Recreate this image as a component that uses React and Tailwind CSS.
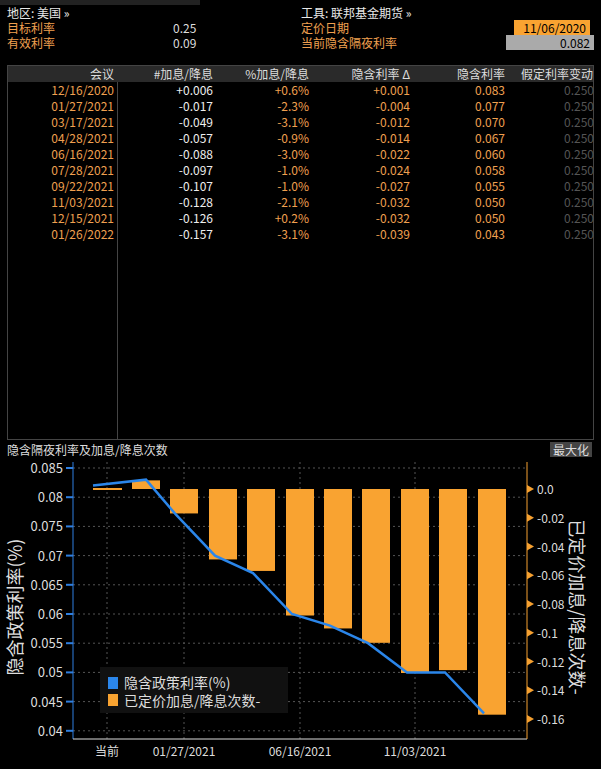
import React from 'react';

const rows = [
  ['12/16/2020', '+0.006', '+0.6%', '+0.001', '0.083'],
  ['01/27/2021', '-0.017', '-2.3%', '-0.004', '0.077'],
  ['03/17/2021', '-0.049', '-3.1%', '-0.012', '0.070'],
  ['04/28/2021', '-0.057', '-0.9%', '-0.014', '0.067'],
  ['06/16/2021', '-0.088', '-3.0%', '-0.022', '0.060'],
  ['07/28/2021', '-0.097', '-1.0%', '-0.024', '0.058'],
  ['09/22/2021', '-0.107', '-1.0%', '-0.027', '0.055'],
  ['11/03/2021', '-0.128', '-2.1%', '-0.032', '0.050'],
  ['12/15/2021', '-0.126', '+0.2%', '-0.032', '0.050'],
  ['01/26/2022', '-0.157', '-3.1%', '-0.039', '0.043'],
];

const font = { fontFamily: '"Noto Sans CJK SC", "Liberation Sans", sans-serif' };

// chart scales
const yL = (v) => 469 + ((0.085 - v) / 0.005) * 29.2 - 458;
const yR = (v) => 490 + (-v / 0.02) * 28.75 - 458;
const barX = [146, 184, 223, 261, 300, 338, 376, 415, 453, 492];

const Chart = () => {
  const linePts = [[93, 0.082], [146, 0.083], ...rows.slice(1).map((r, i) => [barX[i + 1] - 8, parseFloat(r[4])])]
    .map(([x, v]) => `${x},${yL(v)}`).join(' ');
  const leftTicks = [0.085, 0.08, 0.075, 0.07, 0.065, 0.06, 0.055, 0.05, 0.045, 0.04];
  const rightTicks = [0, -0.02, -0.04, -0.06, -0.08, -0.1, -0.12, -0.14, -0.16];
  return (
    <svg width="601" height="311" className="block" style={font}>
      {leftTicks.map((t) => (
        <g key={t}>
          <line x1="73" x2="527" y1={yL(t)} y2={yL(t)} stroke="#555" strokeDasharray="2 3" />
          <line x1="66" x2="73" y1={yL(t)} y2={yL(t)} stroke="#2f7fe0" strokeWidth="2" />
          <text x="63" y={yL(t) + 5} textAnchor="end" fill="#ddd" fontSize="13">{String(t)}</text>
        </g>
      ))}
      {[107, 184, 300, 415].map((x) => (
        <line key={x} x1={x} x2={x} y1="5" y2="282" stroke="#555" strokeDasharray="2 3" />
      ))}
      <line x1="73" x2="73" y1="5" y2="282" stroke="#2f7fe0" />
      <line x1="73" x2="527" y1="282" y2="282" stroke="#ddd" />
      <line x1="527" x2="527" y1="5" y2="282" stroke="#f5a030" />
      {rightTicks.map((t) => (
        <g key={t}>
          <polygon points={`527,${yR(t) - 4} 534,${yR(t)} 527,${yR(t) + 4}`} fill="#f5a030" />
          <text x="537" y={yR(t) + 5} fill="#ddd" fontSize="12">{t === 0 ? '0.0' : t === -0.1 ? '-0.1' : t.toFixed(2)}</text>
        </g>
      ))}
      <line x1="93" x2="122" y1={yR(0)} y2={yR(0)} stroke="#f5a030" strokeWidth="2" />
      {rows.map((r, i) => {
        const v = parseFloat(r[1]);
        const y0 = yR(0), y1 = yR(v);
        return <rect key={i} x={barX[i] - 14} width="28" y={Math.min(y0, y1)} height={Math.abs(y1 - y0)} fill="#f9a331" />;
      })}
      <polyline points={linePts} fill="none" stroke="#2b86ea" strokeWidth="2.5" />
      <rect x="100" y="210" width="188" height="46" fill="#111" />
      <rect x="108" y="220" width="10" height="12" fill="#2b86ea" />
      <text x="124" y="231" fill="#ddd" fontSize="14">隐含政策利率(%)</text>
      <rect x="108" y="237" width="10" height="12" fill="#f9a331" />
      <text x="124" y="249" fill="#ddd" fontSize="14">已定价加息/降息次数-</text>
      {[['当前', 107], ['01/27/2021', 184], ['06/16/2021', 300], ['11/03/2021', 415]].map(([l, x]) => (
        <text key={l} x={x} y="299" textAnchor="middle" fill="#ddd" fontSize="12">{l}</text>
      ))}
      <text transform="translate(22,150) rotate(-90)" textAnchor="middle" fill="#ddd" fontSize="18">隐含政策利率(%)</text>
      <text transform="translate(570,150) rotate(90)" textAnchor="middle" fill="#ddd" fontSize="18">已定价加息/降息次数-</text>
    </svg>
  );
};

export default function App() {
  return (
    <div className="w-[601px] h-[769px] bg-black text-[12px] overflow-hidden" style={font}>
      <div className="h-[5px] flex">
        <div className="w-[200px] bg-[#222]" />
      </div>
      <div className="flex px-[7px] leading-[15px]">
        <div className="w-[294px]">
          <div className="text-[#e8e8e8]">地区: 美国 »</div>
          <div className="flex text-[#f0a050]"><span className="w-[166px]">目标利率</span><span className="text-[#ddd]">0.25</span></div>
          <div className="flex text-[#f0a050]"><span className="w-[166px]">有效利率</span><span className="text-[#ddd]">0.09</span></div>
        </div>
        <div className="flex-1">
          <div className="text-[#e8e8e8]">工具: 联邦基金期货 »</div>
          <div className="flex justify-between text-[#f0a050]"><span>定价日期</span><span className="bg-[#f9a331] text-black w-[76px] text-right pr-1 mr-1">11/06/2020</span></div>
          <div className="flex justify-between text-[#f0a050]"><span>当前隐含隔夜利率</span><span className="bg-[#aaa] text-black w-[88px] text-right pr-1">0.082</span></div>
        </div>
      </div>
      <div className="mx-[7px] mt-[15px] h-[375px] border border-[#444] flex flex-col">
        <div className="flex bg-[#2a2a2a] text-[#ddd] h-[16px] leading-[16px] text-[12px]">
          <div className="w-[110px] text-right pr-[4px]">会议</div>
          <div className="w-[95px] text-right">#加息/降息</div>
          <div className="w-[96px] text-right">%加息/降息</div>
          <div className="w-[101px] text-right">隐含利率 Δ</div>
          <div className="w-[95px] text-right">隐含利率</div>
          <div className="flex-1 text-right">假定利率变动</div>
        </div>
        <div className="flex flex-1">
          <div className="w-[110px] border-r border-[#444]" />
          <div className="flex-1" />
        </div>
        <div className="absolute mt-[16px] w-[586px] text-[12px] leading-[16px]">
          {rows.map((r) => (
            <div key={r[0]} className="flex">
              <div className="w-[110px] text-right pr-[4px] text-[#f0a050]">{r[0]}</div>
              <div className="w-[95px] text-right text-[#eee]">{r[1]}</div>
              <div className="w-[96px] text-right text-[#f0a050]">{r[2]}</div>
              <div className="w-[101px] text-right text-[#f0a050]">{r[3]}</div>
              <div className="w-[95px] text-right text-[#f0a050]">{r[4]}</div>
              <div className="flex-1 text-right text-[#555]">0.250</div>
            </div>
          ))}
        </div>
      </div>
      <div className="flex justify-between px-[7px] mt-[2px] text-[12px] leading-[15px] text-[#ddd]">
        <span>隐含隔夜利率及加息/降息次数</span>
        <span className="bg-[#444] px-[3px] mr-[2px]">最大化</span>
      </div>
      <Chart />
    </div>
  );
}
